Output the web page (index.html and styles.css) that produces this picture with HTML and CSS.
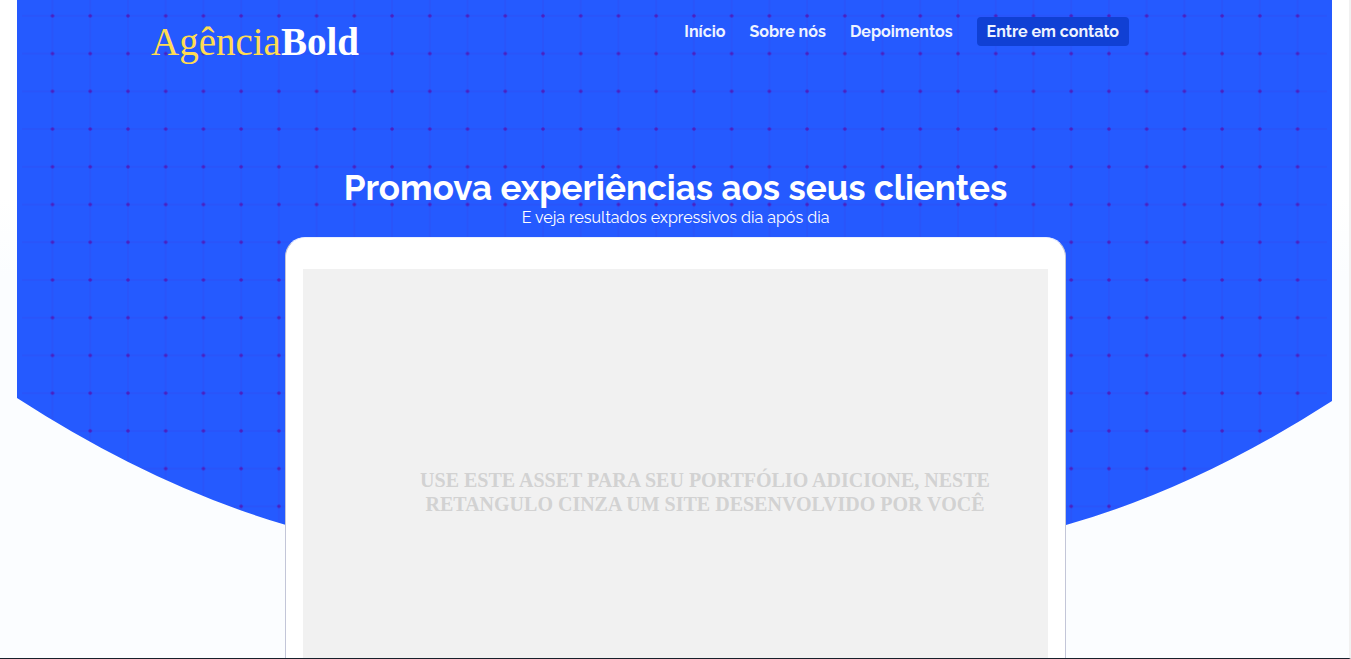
FILE: index.html
```html
<!DOCTYPE html>
<html lang="pt-BR">
<head>
<meta charset="utf-8">
<meta name="viewport" content="width=device-width, initial-scale=1">
<title>Agência Bold</title>
<link rel="stylesheet" href="styles.css">
</head>
<body>
<div class="page">
  <svg class="backdrop" viewBox="0 0 1315 600" preserveAspectRatio="none" aria-hidden="true">
    <defs>
      <pattern id="grid" x="16.6" y="-3" width="37.73" height="37.73" patternUnits="userSpaceOnUse">
        <path d="M18.9 0V37.73M0 18.9H37.73" stroke="#5020c0" stroke-opacity=".18" stroke-width="1"/>
        <circle cx="18.9" cy="18.9" r="1.8" fill="#4a1fc0"/>
      </pattern>
      <clipPath id="dome">
        <path d="M0 0H1315V401Q1180 488 1049 525Q658 660 269 525Q136 486 0 398Z"/>
      </clipPath>
    </defs>
    <g clip-path="url(#dome)">
      <rect width="1315" height="600" fill="#255aff"/>
      <rect x="5" width="1305" height="600" fill="url(#grid)"/>
    </g>
  </svg>
  <header class="header">
    <a class="logo" href="#">Agência<strong>Bold</strong></a>
    <nav class="nav">
      <a href="#inicio">Início</a>
      <a href="#sobre">Sobre nós</a>
      <a href="#depoimentos">Depoimentos</a>
      <a class="contact" href="#contato">Entre em contato</a>
    </nav>
  </header>
  <main class="hero" id="inicio">
    <h1>Promova experiências aos seus clientes</h1>
    <p class="lead">E veja resultados expressivos dia após dia</p>
    <div class="device">
      <div class="screen">
        <p>USE ESTE ASSET PARA SEU PORTFÓLIO ADICIONE, NESTE RETANGULO CINZA UM SITE DESENVOLVIDO POR VOCÊ</p>
      </div>
    </div>
  </main>
</div>
</body>
</html>
```
FILE: styles.css
```css
* { box-sizing: border-box; }

body {
  margin: 0;
  font-family: Raleway, Lato, sans-serif;
  color: #fff;
}

.page {
  position: relative;
  height: 100vh;
  overflow: hidden;
  padding: 0 17px;
  background: linear-gradient(#fff 198px, #fbfdff 276px);
  border-right: 2px solid #f1f1f1;
  border-bottom: 1px solid #17202b;
}

.backdrop {
  position: absolute;
  top: 0;
  left: 17px;
  width: calc(100% - 34px);
  height: 600px;
}

.header {
  position: relative;
  display: flex;
  justify-content: space-between;
  align-items: flex-start;
  padding: 17px 203px 0 134px;
}

.logo {
  padding-top: 3px;
  font: 39px/44px "Liberation Serif", serif;
  color: #ffdc52;
  text-decoration: none;
}

.logo strong { color: #fff; }

.nav {
  display: flex;
  gap: 24px;
  font-size: 16px;
  line-height: 29px;
  font-weight: 700;
}

.nav a {
  color: #eef3ff;
  text-decoration: none;
  white-space: nowrap;
}

.nav .contact {
  padding: 0 10px;
  border-radius: 4px;
  background: #1040d4;
}

.hero {
  position: relative;
  padding: 103px 0 0 2px;
  text-align: center;
}

h1 {
  margin: 0;
  font-size: 35px;
  line-height: 42px;
  font-weight: 700;
}

.lead {
  margin: 0 0 10px;
  font-size: 16px;
  line-height: 18px;
}

.device {
  max-width: 781px;
  margin: 0 auto;
  padding: 31px 17px;
  border: 1px solid #c3c6d8;
  border-top-color: #e9efff;
  border-radius: 20px;
  background: #fff;
}

.screen {
  display: flex;
  justify-content: center;
  align-items: center;
  min-height: 446px;
  padding-left: 59px;
  background: #f1f1f1;
}

.screen p {
  max-width: 580px;
  margin: 0;
  font: 700 20px/24px "Liberation Serif", serif;
  color: #d2d2d2;
}
```
